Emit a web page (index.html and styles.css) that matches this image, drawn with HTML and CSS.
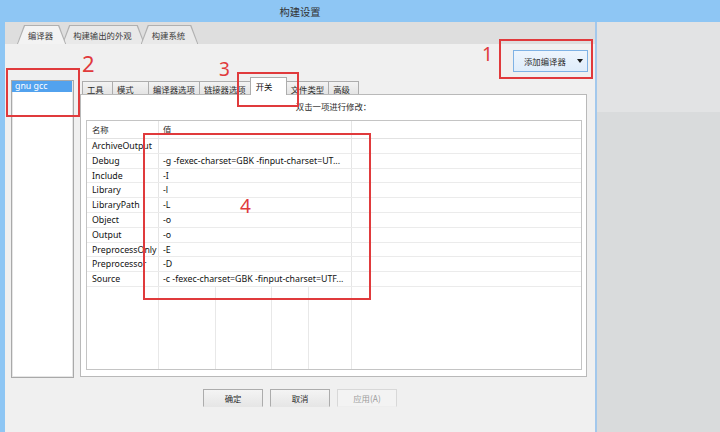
FILE: index.html
```html
<!DOCTYPE html>
<html lang="zh">

<head>
    <meta charset="UTF-8">
    <meta name="viewport" content="width=device-width, initial-scale=1.0">
    <title>构建设置</title>
    <link rel="stylesheet" href="styles.css">
</head>

<body>
    <div class="titlebar"><span class="title">构建设置</span></div>

    <div class="screen">
        <div class="window">
            <div class="tabstrip">
                <div class="tab active"><span>编译器</span></div>
                <div class="tab"><span>构建输出的外观</span></div>
                <div class="tab"><span>构建系统</span></div>
            </div>

            <div class="page">
                <div class="page-top">
                    <button class="add-btn">添加编译器<span class="arrow"></span></button>
                </div>

                <div class="page-main">
                    <ul class="compiler-list">
                        <li class="selected">gnu gcc</li>
                    </ul>

                    <div class="settings">
                        <div class="subtabs">
                            <div class="subtab">工具</div>
                            <div class="subtab wide">模式</div>
                            <div class="subtab">编译器选项</div>
                            <div class="subtab">链接器选项</div>
                            <div class="subtab wide active">开关</div>
                            <div class="subtab">文件类型</div>
                            <div class="subtab">高级</div>
                        </div>
                        <div class="subpanel">
                            <p class="hint">双击一项进行修改：</p>
                            <div class="grid">
                                <div class="row head">
                                    <span class="c-name cjk">名称</span>
                                    <span class="c-val cjk">值</span>
                                </div>
                                <div class="row"><span class="c-name">ArchiveOutput</span><span class="c-val"></span></div>
                                <div class="row"><span class="c-name">Debug</span><span class="c-val">-g -fexec-charset=GBK -finput-charset=UT...</span></div>
                                <div class="row"><span class="c-name">Include</span><span class="c-val">-I</span></div>
                                <div class="row"><span class="c-name">Library</span><span class="c-val">-l</span></div>
                                <div class="row"><span class="c-name">LibraryPath</span><span class="c-val">-L</span></div>
                                <div class="row"><span class="c-name">Object</span><span class="c-val">-o</span></div>
                                <div class="row"><span class="c-name">Output</span><span class="c-val">-o</span></div>
                                <div class="row"><span class="c-name">PreprocessOnly</span><span class="c-val">-E</span></div>
                                <div class="row"><span class="c-name">Preprocessor</span><span class="c-val">-D</span></div>
                                <div class="row"><span class="c-name">Source</span><span class="c-val">-c -fexec-charset=GBK -finput-charset=UTF...</span></div>
                                <div class="grid-empty">
                                    <span class="col c1"></span>
                                    <span class="col c2"></span>
                                    <span class="col c3"></span>
                                    <span class="col c4"></span>
                                    <span class="col c5"></span>
                                </div>
                            </div>
                        </div>
                    </div>
                </div>

                <div class="page-bottom">
                    <button class="dlg-btn">确定</button>
                    <button class="dlg-btn">取消</button>
                    <button class="dlg-btn" disabled>应用(A)</button>
                </div>
            </div>
        </div>
        <div class="desktop"></div>
    </div>

    <!-- red annotation marks -->
    <div class="mark m1"></div>
    <div class="mark m2"></div>
    <div class="mark m3"></div>
    <div class="mark m4"></div>
    <span class="num n1">1</span>
    <span class="num n2">2</span>
    <span class="num n3">3</span>
    <span class="num n4">4</span>
</body>

</html>
```

FILE: styles.css
```css
* {
    box-sizing: border-box;
}

body {
    margin: 0;
    width: 720px;
    height: 432px;
    overflow: hidden;
    position: relative;
    background: #dfe0e1;
    font-family: "Noto Sans", "Noto Sans CJK SC", sans-serif;
    font-size: 8.8px;
    color: #111;
}

.cjk,
.title,
.tab,
.subtab,
.hint,
.add-btn,
.dlg-btn {
    font-family: "Noto Sans CJK SC", sans-serif;
}

.titlebar {
    height: 22px;
    background: #8ec6f4;
}

.title {
    display: block;
    width: 600px;
    text-align: center;
    line-height: 23px;
    font-size: 10.3px;
    color: #333;
}

.screen {
    display: flex;
    height: 410px;
}

.window {
    width: 597px;
    display: flex;
    flex-direction: column;
    background: #f0f0f0;
    border-left: 5px solid #8ec6f4;
    border-right: 2px solid #a3c8ec;
}

.desktop {
    flex: 1;
    background: linear-gradient(#e2e3e4 0, #e2e3e4 90px, #d9dbdc 90px);
}

/* top tabs */
.tabstrip {
    height: 22px;
    display: flex;
    align-items: flex-end;
    padding-left: 12px;
    background: #dedede;
}

.tab {
    height: 19px;
    margin-right: -4px;
    padding: 1px 1px 0;
    background: #b0b0b0;
    clip-path: polygon(0 100%, 7px 0, calc(100% - 7px) 0, 100% 100%);
    font-size: 8.4px;
    color: #3c3c3c;
}

.tab span {
    display: block;
    height: 100%;
    padding: 0 12px 0 10px;
    line-height: 18px;
    background: #e9e9e9;
    clip-path: polygon(0 100%, 7px 0, calc(100% - 7px) 0, 100% 100%);
}

.tab.active {
    position: relative;
    z-index: 1;
}

.tab.active span {
    background: #f3f3f3;
}

/* page */
.page {
    flex: 1;
    display: flex;
    flex-direction: column;
}

.page-top {
    height: 33px;
    display: flex;
    justify-content: flex-end;
    align-items: flex-start;
    padding: 6px 7px 0 0;
}

.add-btn {
    width: 75px;
    height: 22px;
    display: flex;
    align-items: center;
    padding: 0 0 0 10px;
    border: 1px solid #7fb2e5;
    background: linear-gradient(#eef5fd, #dfedfb);
    font-size: 8.4px;
    color: #2c2c2c;
}

.add-btn .arrow {
    margin-left: 11px;
    border-left: 3.5px solid transparent;
    border-right: 3.5px solid transparent;
    border-top: 4px solid #1a1a1a;
}

.page-main {
    height: 301px;
    display: flex;
    gap: 6px;
    padding-left: 6px;
}

.compiler-list {
    width: 63px;
    height: 298px;
    margin: 3px 0 0;
    padding: 0;
    list-style: none;
    background: #fff;
    border: 1px solid #a9a9a9;
    box-shadow: inset 0 0 0 1px #e6e6e6;
}

.compiler-list li {
    height: 11px;
    margin-right: 1px;
    padding-left: 3px;
    line-height: 11px;
    font-size: 8.8px;
}

.compiler-list li.selected {
    background: #52a2ee;
    color: #fff;
}

.settings {
    width: 507px;
    height: 300px;
    display: flex;
    flex-direction: column;
}

.subtabs {
    height: 17px;
    display: flex;
    align-items: flex-end;
    padding-left: 2px;
}

.subtab {
    position: relative;
    height: 13px;
    min-width: 31px;
    padding: 0 4px;
    margin-right: -1px;
    line-height: 14px;
    font-size: 8.4px;
    color: #2c2c2c;
    border: 1px solid #adadad;
    border-bottom: none;
    background: linear-gradient(#f3f3f3, #e4e4e4);
}

.subtab.wide {
    min-width: 37px;
}

.subtab.active {
    z-index: 1;
    height: 18px;
    margin-bottom: -1px;
    padding-left: 5px;
    line-height: 17px;
    background: #fff;
    color: #111;
}

.subpanel {
    flex: 1;
    background: #fff;
    border: 1px solid #b9b9b9;
}

.hint {
    height: 25px;
    margin: 0;
    line-height: 22px;
    text-align: center;
    font-size: 8.4px;
    color: #2c2c2c;
}

/* list view */
.grid {
    height: 250px;
    margin: 0 4px 0 5px;
    display: flex;
    flex-direction: column;
    border: 1px solid #c4c4c4;
}

.row {
    display: flex;
    height: 14.8px;
    line-height: 14px;
    border-bottom: 1px solid #ebebeb;
    white-space: nowrap;
}

.row.head {
    height: 18px;
    line-height: 17px;
    font-size: 8.4px;
    color: #2c2c2c;
    border-bottom-color: #e2e2e2;
}

.c-name {
    width: 72px;
    padding-left: 5px;
    border-right: 1px solid #e5e5e5;
}

.c-val {
    width: 193px;
    padding-left: 4px;
    border-right: 1px solid #e5e5e5;
}

.grid-empty {
    flex: 1;
    display: flex;
}

.col {
    border-right: 1px solid #e8e8e8;
}

.c1 { width: 72px; }
.c2 { width: 57px; }
.c3 { width: 56px; }
.c4 { width: 37px; }
.c5 { width: 43px; }

/* dialog buttons */
.page-bottom {
    flex: 1;
    display: flex;
    justify-content: center;
    gap: 7px;
    padding-top: 11px;
}

.dlg-btn {
    width: 60px;
    height: 18px;
    padding: 0;
    font-size: 8.4px;
    color: #2c2c2c;
    border: 1px solid #acacac;
    border-bottom-color: #e6e6e6;
    background: linear-gradient(#f4f4f4, #e6e6e6);
}

.dlg-btn:disabled {
    color: #9c9c9c;
    border-color: #d8d8d8;
    border-bottom-color: #eeeeee;
    background: #f3f3f3;
}

/* annotations */
.mark {
    position: absolute;
    border: 2px solid #e03a3c;
}

.m1 { left: 499px; top: 39px; width: 94px; height: 40px; }
.m2 { left: 6px; top: 68px; width: 74px; height: 49px; }
.m3 { left: 237px; top: 72px; width: 62px; height: 35px; }
.m4 { left: 143px; top: 133px; width: 228px; height: 167px; }

.num {
    position: absolute;
    font-family: "Noto Sans", sans-serif;
    font-size: 19px;
    line-height: 1;
    color: #e03a3c;
}

.n1 { left: 482px; top: 45px; }
.n2 { left: 82px; top: 52px; font-size: 22px; }
.n3 { left: 219px; top: 60px; }
.n4 { left: 240px; top: 197px; }
```
